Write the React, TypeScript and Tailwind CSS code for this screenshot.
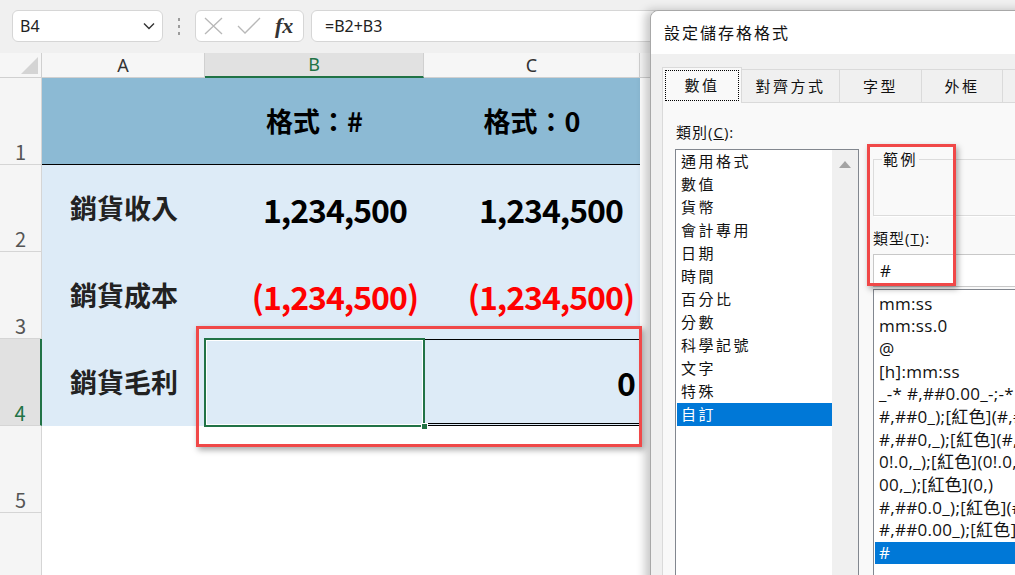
import React from "react";

const categories = ["通用格式", "數值", "貨幣", "會計專用", "日期", "時間", "百分比", "分數", "科學記號", "文字", "特殊", "自訂"];

const formats = [
    "mm:ss",
    "mm:ss.0",
    "@",
    "[h]:mm:ss",
    "_-* #,##0.00_-;-* #,##0.00_-;_-* \"-\"??_-;_-@_-",
    "#,##0_);[紅色](#,##0)",
    "#,##0,_);[紅色](#,##0,)",
    "0!.0,_);[紅色](0!.0,)",
    "00,_);[紅色](0,)",
    "#,##0.0_);[紅色](#,##0.0)",
    "#,##0.00_);[紅色](#,##0.00)",
    "#",
];

function FormulaBar() {
    return (
        <div className="h-[53px] bg-[#f0f0f0] flex items-start pt-[10px] pl-[12px]">
            <div className="w-[151px] h-[32px] bg-white border border-[#d6d6d6] rounded-[6px] flex items-center justify-between pl-[7px] pr-[7px] text-[16px] text-[#222]">
                <span>B4</span>
                <svg width="12" height="8" viewBox="0 0 12 8">
                    <path d="M1 1.5 L6 6.5 L11 1.5" fill="none" stroke="#333" strokeWidth="1.4" />
                </svg>
            </div>
            <div className="w-[32px] h-[32px] flex flex-col items-center justify-center gap-[4px]">
                <span className="w-[2px] h-[3px] bg-[#9c9c9c]" />
                <span className="w-[2px] h-[3px] bg-[#9c9c9c]" />
                <span className="w-[2px] h-[3px] bg-[#9c9c9c]" />
            </div>
            <div className="w-[109px] h-[32px] bg-white border border-[#d6d6d6] rounded-[6px] flex items-center pl-[8px] gap-[14px]">
                <svg width="19" height="18" viewBox="0 0 19 18">
                    <path d="M1 1 L18 17 M18 1 L1 17" fill="none" stroke="#b8b8b8" strokeWidth="1.3" />
                </svg>
                <svg width="24" height="18" viewBox="0 0 24 18">
                    <path d="M1 9 L8 16 L23 1" fill="none" stroke="#b8b8b8" strokeWidth="1.3" />
                </svg>
                <span className="font-['Liberation_Serif',serif] italic font-bold text-[22px] leading-none text-[#333]">fx</span>
            </div>
            <div className="ml-[7px] flex-1 h-[32px] bg-white border border-[#d6d6d6] rounded-[6px] pl-[13px] flex items-center text-[16px] text-[#222]">
                =B2+B3
            </div>
        </div>
    );
}

function RowHead({ n, active }: { n: string; active?: boolean }) {
    return (
        <div
            className={
                active
                    ? "w-[42px] shrink-0 flex items-end justify-center text-[20px] leading-[24px] bg-[#e1e1e1] text-[#217346] border-r-2 border-[#217346] border-b border-b-[#d5d5d5]"
                    : "w-[42px] shrink-0 flex items-end justify-center text-[20px] leading-[24px] bg-[#f5f5f5] text-[#555] border-r border-b border-[#d5d5d5]"
            }
        >
            {n}
        </div>
    );
}

function Num({ value, neg }: { value: string; neg?: boolean }) {
    return neg ? (
        <span className="text-[#ff0000]">({value})</span>
    ) : (
        <span>
            {value}
            <span className="invisible">)</span>
        </span>
    );
}

function Sheet() {
    const label = "w-[163px] shrink-0 flex items-center pl-[28px] text-[27px] font-bold text-[#222]";
    const num = "shrink-0 flex items-center justify-end pr-[6px] text-[32px] tracking-[-1px] font-bold text-black";
    return (
        <div className="flex flex-col font-['Noto_Sans_CJK_TC',sans-serif]">
            {/* column headers */}
            <div className="flex h-[25px] bg-[#f6f6f6] text-[18px] text-[#333] font-['Noto_Sans',sans-serif]">
                <div className="w-[42px] shrink-0 flex items-end justify-end pr-[3px] pb-[3px] border-r border-b border-[#d0d0d0]">
                    <svg width="17" height="17" viewBox="0 0 17 17">
                        <polygon points="17,0 17,17 0,17" fill="#d4d4d4" />
                    </svg>
                </div>
                <div className="w-[163px] shrink-0 flex items-center justify-center border-r border-b border-[#d0d0d0]">A</div>
                <div className="w-[219px] shrink-0 flex items-center justify-center bg-[#e1e1e1] text-[#217346] border-r border-r-[#d0d0d0] border-b-2 border-b-[#217346]">B</div>
                <div className="w-[216px] shrink-0 flex items-center justify-center border-r border-b border-[#d0d0d0]">C</div>
                <div className="flex-1 flex items-center justify-center border-b border-[#d0d0d0]">D</div>
            </div>

            {/* row 1 */}
            <div className="flex h-[87px]">
                <RowHead n="1" />
                <div className="flex bg-[#8cbad4] border-b border-black">
                    <div className="w-[163px]" />
                    <div className="w-[219px] flex items-center justify-center text-[27px] font-bold text-black">格式：#</div>
                    <div className="w-[216px] flex items-center justify-center text-[27px] font-bold text-black">格式：0</div>
                </div>
            </div>

            {/* row 2 */}
            <div className="flex h-[87px]">
                <RowHead n="2" />
                <div className="flex bg-[#ddebf7]">
                    <div className={label}>銷貨收入</div>
                    <div className={`${num} w-[219px]`}><Num value="1,234,500" /></div>
                    <div className={`${num} w-[216px]`}><Num value="1,234,500" /></div>
                </div>
            </div>

            {/* row 3 */}
            <div className="flex h-[87px]">
                <RowHead n="3" />
                <div className="flex bg-[#ddebf7]">
                    <div className={label}>銷貨成本</div>
                    <div className={`${num} w-[219px]`}><Num value="1,234,500" neg /></div>
                    <div className={`${num} w-[216px]`}><Num value="1,234,500" neg /></div>
                </div>
            </div>

            {/* row 4 */}
            <div className="flex h-[87px]">
                <RowHead n="4" active />
                <div className="flex bg-[#ddebf7]">
                    <div className={label}>銷貨毛利</div>
                    <div className="relative w-[219px]">
                        <div className="absolute -inset-[1px] border-2 border-[#217346] shadow-[inset_0_0_0_1px_#ffffff]" />
                        <div className="absolute -right-[4px] -bottom-[4px] w-[7px] h-[7px] bg-[#217346] border border-white" />
                    </div>
                    <div className="w-[216px] flex items-center justify-end pr-[4px] text-[32px] font-bold text-black border-t border-black border-b-[3px] border-b-black border-double">
                        0
                    </div>
                </div>
            </div>

            {/* row 5 */}
            <div className="flex h-[87px]">
                <RowHead n="5" />
                <div className="flex-1 bg-white" />
            </div>
            <div className="flex h-[87px]">
                <RowHead n="" />
                <div className="flex-1 bg-white" />
            </div>
        </div>
    );
}

function FormatDialog() {
    return (
        <div className="absolute left-[650px] top-[10px] w-[560px] h-[620px] flex flex-col bg-[#f0f0f0] border border-[#a8a8a8] rounded-tl-[8px] shadow-[-5px_0_10px_rgba(0,0,0,0.22)] font-['Open_Sans','Noto_Sans_CJK_TC',sans-serif] text-[15px] tracking-[2.5px] text-[#111]">
            <div className="h-[43px] shrink-0 bg-white rounded-tl-[8px] flex items-center pl-[13px] text-[16px] tracking-[2px]">
                設定儲存格格式
            </div>

            <div className="flex-1 flex flex-col pt-[13px] pl-[11px]">
                {/* tabs */}
                <div className="flex items-end h-[36px] -mb-[1px]">
                    <div className="w-[80px] h-[36px] bg-[#f9f9f9] border border-b-0 border-[#dadada] p-[2px] relative z-10">
                        <div className="w-full h-full border border-dotted border-black flex items-center justify-center">數值</div>
                    </div>
                    <div className="w-[98px] h-[34px] flex items-center justify-center border border-l-0 border-[#dadada]">對齊方式</div>
                    <div className="w-[82px] h-[34px] flex items-center justify-center border border-l-0 border-[#dadada]">字型</div>
                    <div className="w-[81px] h-[34px] flex items-center justify-center border border-l-0 border-[#dadada]">外框</div>
                    <div className="w-[81px] h-[34px] flex items-center justify-center border border-l-0 border-[#dadada]">填滿</div>
                </div>

                {/* panel */}
                <div className="flex-1 flex gap-[14px] bg-[#f9f9f9] border-l border-t border-[#dadada] pl-[12px]">
                    <div className="w-[184px] flex flex-col pt-[19px]">
                        <div className="h-[20px] leading-[20px] pl-[1px] tracking-[1px]">
                            類別(<span className="underline">C</span>):
                        </div>
                        <div className="mt-[7px] flex-1 flex bg-white border border-[#82878f]">
                            <div className="flex-1 pt-[0px] pl-[1px]">
                                {categories.map((c, i) => (
                                    <div
                                        key={c}
                                        className={
                                            i === categories.length - 1
                                                ? "h-[23px] flex items-center pl-[4px] bg-[#0078d7] text-white"
                                                : "h-[23px] flex items-center pl-[4px]"
                                        }
                                    >
                                        {c}
                                    </div>
                                ))}
                            </div>
                            <div className="w-[26px] bg-[#f0f0f0] flex justify-center pt-[11px]">
                                <svg width="12" height="7" viewBox="0 0 12 7">
                                    <polygon points="6,0 12,7 0,7" fill="#a3a3a3" />
                                </svg>
                            </div>
                        </div>
                    </div>

                    <div className="w-[300px] flex flex-col pt-[46px]">
                        <fieldset className="h-[67px] border border-[#dcdcdc] shadow-[1px_1px_0_#ffffff]">
                            <legend className="ml-[8px] px-[1px] leading-[20px]">範例</legend>
                        </fieldset>
                        <div className="mt-[12px] h-[20px] leading-[20px] tracking-[1px]">
                            類型(<span className="underline">T</span>):
                        </div>
                        <div className="mt-[6px] h-[33px] bg-white border border-[#c8c8c8] flex items-center pl-[6px] text-[17px] tracking-normal">#</div>
                        <div className="mt-[2px] flex-1 bg-white border border-[#82878f] pt-[2px] pl-[1px] overflow-hidden text-[17px] tracking-[0.3px]">
                            {formats.map((f, i) => (
                                <div
                                    key={f}
                                    className={
                                        i === formats.length - 1
                                            ? "h-[22.7px] flex items-center pl-[4px] whitespace-nowrap bg-[#0078d7] text-white"
                                            : "h-[22.7px] flex items-center pl-[4px] whitespace-nowrap"
                                    }
                                >
                                    {f}
                                </div>
                            ))}
                        </div>
                    </div>
                </div>
            </div>
        </div>
    );
}

export default function App() {
    return (
        <div className="relative w-[1015px] h-[575px] overflow-hidden bg-white">
            <FormulaBar />
            <Sheet />
            <FormatDialog />
            <div className="absolute left-[196px] top-[326px] w-[446px] h-[121px] border-[3px] border-[#f04848] shadow-[2px_3px_6px_rgba(0,0,0,0.35)]" />
            <div className="absolute left-[867px] top-[144px] w-[89px] h-[142px] border-[3px] border-[#f04848] shadow-[2px_3px_6px_rgba(0,0,0,0.35)]" />
        </div>
    );
}
